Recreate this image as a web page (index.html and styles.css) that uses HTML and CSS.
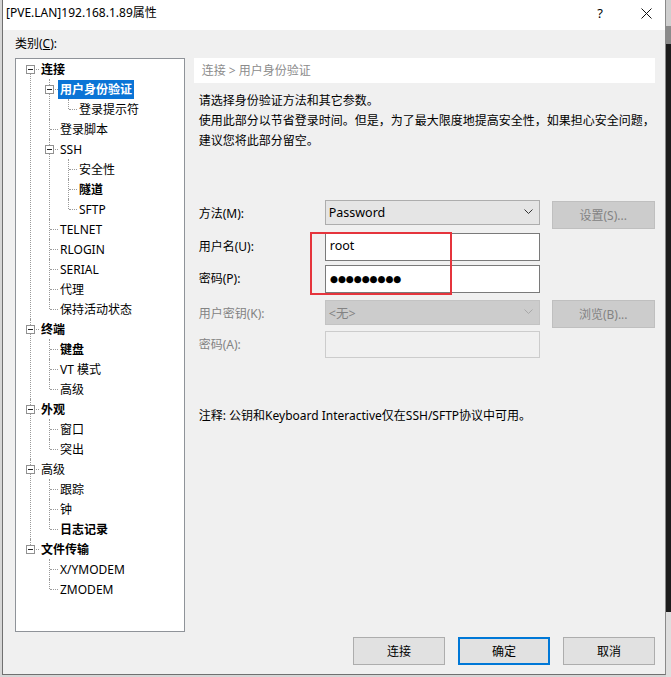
FILE: index.html
```html
<!DOCTYPE html>
<html lang="zh-CN">
<head>
<meta charset="utf-8">
<title>[PVE.LAN]192.168.1.89属性</title>
<link rel="stylesheet" href="styles.css">
</head>
<body>
<div class="screen">
  <div class="win">
    <div class="titlebar">
      <span class="title">[PVE.LAN]192.168.1.89属性</span>
      <div class="caption">
        <span class="cap help">?</span>
        <span class="cap close"><svg width="11" height="11" viewBox="0 0 11 11"><path d="M0.5 0.5L10.5 10.5M10.5 0.5L0.5 10.5" stroke="#111" stroke-width="1" fill="none"/></svg></span>
      </div>
    </div>
    <div class="body">
      <div class="cat">类别(<u>C</u>):</div>
      <div class="main">
        <div class="tree">
          <ul class="root">
            <li><div class="row"><i class="exp"></i><span class="lbl b">连接</span></div>
              <ul>
                <li><div class="row"><i class="exp"></i><span class="lbl b sel">用户身份验证</span></div>
                  <ul>
                    <li><div class="row"><span class="lbl">登录提示符</span></div></li>
                  </ul>
                </li>
                <li><div class="row"><span class="lbl">登录脚本</span></div></li>
                <li><div class="row"><i class="exp"></i><span class="lbl">SSH</span></div>
                  <ul>
                    <li><div class="row"><span class="lbl">安全性</span></div></li>
                    <li><div class="row"><span class="lbl b">隧道</span></div></li>
                    <li><div class="row"><span class="lbl">SFTP</span></div></li>
                  </ul>
                </li>
                <li><div class="row"><span class="lbl">TELNET</span></div></li>
                <li><div class="row"><span class="lbl">RLOGIN</span></div></li>
                <li><div class="row"><span class="lbl">SERIAL</span></div></li>
                <li><div class="row"><span class="lbl">代理</span></div></li>
                <li><div class="row"><span class="lbl">保持活动状态</span></div></li>
              </ul>
            </li>
            <li><div class="row"><i class="exp"></i><span class="lbl b">终端</span></div>
              <ul>
                <li><div class="row"><span class="lbl b">键盘</span></div></li>
                <li><div class="row"><span class="lbl">VT 模式</span></div></li>
                <li><div class="row"><span class="lbl">高级</span></div></li>
              </ul>
            </li>
            <li><div class="row"><i class="exp"></i><span class="lbl b">外观</span></div>
              <ul>
                <li><div class="row"><span class="lbl">窗口</span></div></li>
                <li><div class="row"><span class="lbl">突出</span></div></li>
              </ul>
            </li>
            <li><div class="row"><i class="exp"></i><span class="lbl">高级</span></div>
              <ul>
                <li><div class="row"><span class="lbl">跟踪</span></div></li>
                <li><div class="row"><span class="lbl">钟</span></div></li>
                <li><div class="row"><span class="lbl b">日志记录</span></div></li>
              </ul>
            </li>
            <li><div class="row"><i class="exp"></i><span class="lbl b">文件传输</span></div>
              <ul>
                <li><div class="row"><span class="lbl">X/YMODEM</span></div></li>
                <li><div class="row"><span class="lbl">ZMODEM</span></div></li>
              </ul>
            </li>
          </ul>
        </div>
        <div class="panel">
          <div class="crumb">连接 &gt; 用户身份验证</div>
          <div class="desc">
            <p>请选择身份验证方法和其它参数。</p>
            <p>使用此部分以节省登录时间。但是，为了最大限度地提高安全性，如果担心安全问题，建议您将此部分留空。</p>
          </div>
          <div class="form">
            <div class="frow r1">
              <span class="flabel">方法(M):</span>
              <div class="combo"><span>Password</span><svg class="chev" width="9" height="5" viewBox="0 0 9 5"><path d="M0.5 0.5L4.5 4.5L8.5 0.5" stroke="#333" fill="none"/></svg></div>
              <span class="btn dis">设置(S)...</span>
            </div>
            <div class="frow r2">
              <span class="flabel">用户名(U):</span>
              <div class="edit">root</div>
            </div>
            <div class="frow r3">
              <span class="flabel">密码(P):</span>
              <div class="edit pw">●●●●●●●●●</div>
            </div>
            <div class="frow r4">
              <span class="flabel off">用户密钥(K):</span>
              <div class="combo dis"><span>&lt;无&gt;</span><svg class="chev" width="9" height="5" viewBox="0 0 9 5"><path d="M0.5 0.5L4.5 4.5L8.5 0.5" stroke="#a8a8a8" fill="none"/></svg></div>
              <span class="btn dis">浏览(B)...</span>
            </div>
            <div class="frow r5">
              <span class="flabel off">密码(A):</span>
              <div class="edit dis"></div>
            </div>
          </div>
          <p class="note">注释: 公钥和Keyboard Interactive仅在SSH/SFTP协议中可用。</p>
          <div class="mark"></div>
        </div>
      </div>
      <div class="actions">
        <span class="btn act">连接</span>
        <span class="btn act focus">确定</span>
        <span class="btn act">取消</span>
      </div>
    </div>
  </div>
  <div class="edge"></div>
</div>
</body>
</html>
```

FILE: styles.css
```css
* { box-sizing: border-box; }
html, body { margin: 0; padding: 0; }
body {
  background: #d6d6d6;
  font-family: "Noto Sans", "Noto Sans CJK SC", sans-serif;
  font-size: 12px;
  color: #000;
}
.screen {
  display: flex;
  width: 671px;
  height: 677px;
  overflow: hidden;
  padding-left: 2px;
}
.win {
  width: 664px;
  height: 675px;
  border-left: 1px solid #707070;
  border-right: 1px solid #8a8a8a;
  border-bottom: 1px solid #707070;
  background: #f0f0f0;
  display: flex;
  flex-direction: column;
}
.edge {
  flex: 1;
  background: linear-gradient(#cfcfcf 0 26px, #8a8a8a 26px 44px, #1c1c1c 44px 612px, #dedede 612px);
}
.titlebar {
  height: 30px;
  background: #fff;
  display: flex;
  align-items: flex-start;
  justify-content: space-between;
}
.title {
  padding: 3px 0 0 3px;
  line-height: 20px;
  font-size: 12px;
}
.caption { display: flex; }
.cap {
  height: 29px;
  display: flex;
  align-items: center;
  justify-content: center;
}
.help { width: 46px; font-size: 13px; padding-bottom: 3px; }
.close { width: 42px; justify-content: flex-start; padding-left: 18px; padding-bottom: 3px; }

.body {
  flex: 1;
  padding: 4px 10px 0 12px;
  display: flex;
  flex-direction: column;
}
.cat { line-height: 20px; height: 24px; }
.main {
  display: flex;
  gap: 9px;
  height: 574px;
}
.tree {
  width: 170px;
  height: 574px;
  border: 1px solid #8f9399;
  background: #fff;
}
.tree ul { list-style: none; margin: 0; padding: 0 0 0 19px; }
.tree ul.root { padding-left: 0; }
.tree li { position: relative; }
.tree li::before {
  content: "";
  position: absolute;
  left: 14px;
  top: 0;
  bottom: 0;
  border-left: 1px dotted #9a9a9a;
}
.tree li:last-child::before { bottom: auto; height: 10px; }
.tree .root > li:first-child::before { top: 10px; }
.tree .root > li:last-child::before { top: 0; height: 10px; }
.row {
  position: relative;
  height: 20px;
  display: flex;
  align-items: center;
  padding-left: 23px;
}
.row::before {
  content: "";
  position: absolute;
  left: 15px;
  top: 10px;
  width: 8px;
  border-top: 1px dotted #9a9a9a;
}
.exp {
  position: absolute;
  left: 10px;
  top: 6px;
  width: 9px;
  height: 9px;
  border: 1px solid #919191;
  background: #fff;
  z-index: 1;
}
.exp::after {
  content: "";
  position: absolute;
  left: 1px;
  top: 3px;
  width: 5px;
  height: 1px;
  background: #222;
}
.lbl {
  padding: 0 2px;
  line-height: 19px;
  white-space: nowrap;
}
.lbl.b { font-weight: bold; }
.lbl.sel { background: #0a74d6; color: #fff; }

.panel {
  position: relative;
  width: 462px;
}
.crumb {
  height: 25px;
  background: #fff;
  color: #8c8c8c;
  padding-left: 8px;
  line-height: 25px;
}
.desc { margin-top: 8px; padding-left: 5px; }
.desc p { margin: 0; line-height: 20px; }
.form { margin-top: 49px; padding-left: 5px; }
.frow {
  display: flex;
  align-items: flex-start;
  height: 28px;
}
.flabel { width: 126px; line-height: 28px; }
.flabel.off { color: #838383; }
.r2 { margin-top: 5px; }
.r3 { margin-top: 4px; }
.r4 { margin-top: 7px; }
.r5 { margin-top: 3px; height: 27px; }
.r5 .flabel { line-height: 27px; }
.combo {
  width: 215px;
  height: 25px;
  border: 1px solid #adadad;
  background: #e5e5e5;
  display: flex;
  align-items: center;
  justify-content: space-between;
  padding: 0 6px 0 3px;
  font-size: 12.5px;
}
.combo .chev { margin-bottom: 2px; }
.combo.dis { background: #cccccc; border-color: #c3c3c3; color: #838383; }
.edit {
  width: 215px;
  height: 28px;
  border: 1px solid #7a7a7a;
  background: #fff;
  padding-left: 4px;
  line-height: 24px;
  font-size: 12.5px;
}
.edit.pw {
  font-family: "DejaVu Sans", sans-serif;
  font-size: 9.2px;
  letter-spacing: -0.1px;
  line-height: 25px;
}
.edit.dis { background: #f0f0f0; border-color: #cccccc; height: 27px; }
.btn {
  display: flex;
  align-items: center;
  justify-content: center;
  height: 28px;
}
.frow .btn { width: 103px; margin-left: 12px; }
.r1 .btn { margin-top: 1px; }
.btn.dis { background: #cccccc; border: 1px solid #bfbfbf; color: #838383; }
.note { margin: 48px 0 0 5px; line-height: 20px; }
.mark {
  position: absolute;
  left: 116px;
  top: 174px;
  width: 142px;
  height: 63px;
  border: 2px solid #e5343c;
}
.actions {
  margin-top: 5px;
  display: flex;
  justify-content: flex-end;
  gap: 13px;
  padding-right: 0;
}
.btn.act {
  width: 92px;
  background: #e1e1e1;
  border: 1px solid #adadad;
}
.btn.act.focus { border: 2px solid #0078d7; }
```
